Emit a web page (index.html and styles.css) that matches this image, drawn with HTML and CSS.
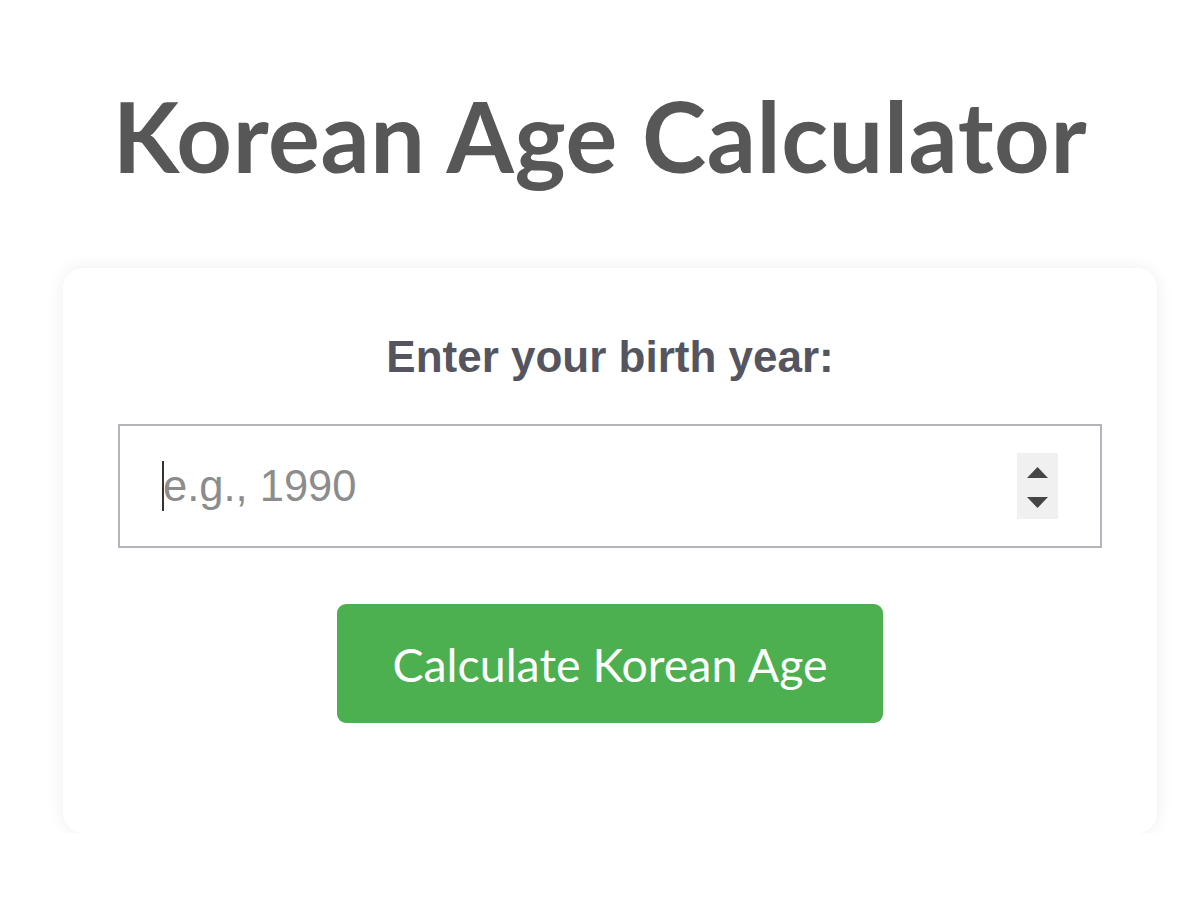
FILE: index.html
```html
<!DOCTYPE html>
<html lang="en">
<head>
<meta charset="utf-8">
<title>Korean Age Calculator</title>
<link rel="stylesheet" href="styles.css">
</head>
<body>
  <main class="page">
    <h1 class="title">Korean Age Calculator</h1>
    <section class="card">
      <label class="label" for="year">Enter your birth year:</label>
      <div class="field" id="year">
        <span class="caret"></span>
        <span class="placeholder">e.g., 1990</span>
        <span class="spin">
          <svg width="41" height="66" viewBox="0 0 41 66">
            <path d="M10 25 L20.5 14 L31 25 Z" fill="#454545"/>
            <path d="M10 44 L31 44 L20.5 55 Z" fill="#454545"/>
          </svg>
        </span>
      </div>
      <button class="btn" type="button">Calculate Korean Age</button>
    </section>
  </main>
</body>
</html>
```
FILE: styles.css
```css
html, body {
  margin: 0;
  padding: 0;
  background: #ffffff;
}

.page {
  display: flex;
  flex-direction: column;
  align-items: center;
  padding-top: 78px;
}

.title {
  margin: 0;
  font-family: "Lato", "Liberation Sans", sans-serif;
  font-weight: 700;
  font-size: 97px;
  line-height: 116px;
  color: #575757;
  letter-spacing: 0.6px;
}

.card {
  margin-top: 74px;
  margin-left: 20px;
  width: 1094px;
  height: 565px;
  box-sizing: border-box;
  background: #fff;
  border-radius: 20px;
  box-shadow: 0 0 18px rgba(0, 0, 0, 0.07);
  padding: 63px 55px 0;
  display: flex;
  flex-direction: column;
  align-items: center;
}

.label {
  font-family: "Liberation Sans", Arial, sans-serif;
  font-weight: 700;
  font-size: 44px;
  line-height: 52px;
  color: #555560;
}

.field {
  margin-top: 41px;
  align-self: stretch;
  height: 124px;
  box-sizing: border-box;
  border: 2px solid #b4b4bc;
  display: flex;
  align-items: center;
  padding: 0 42px 0 42px;
}

.caret {
  width: 2px;
  height: 50px;
  background: #333;
  margin-right: -1px;
}

.placeholder {
  flex: 1;
  font-family: "Liberation Sans", Arial, sans-serif;
  font-size: 43.5px;
  color: #8c8c8c;
}

.spin {
  width: 41px;
  height: 66px;
  background: #f0f0f0;
  display: flex;
}

.btn {
  margin-top: 56px;
  width: 546px;
  height: 119px;
  border: none;
  border-radius: 9px;
  background: #4caf50;
  color: #ffffff;
  font-family: "Lato", "Noto Sans", sans-serif;
  font-size: 46.5px;
  font-weight: 400;
  padding: 0;
}
```
